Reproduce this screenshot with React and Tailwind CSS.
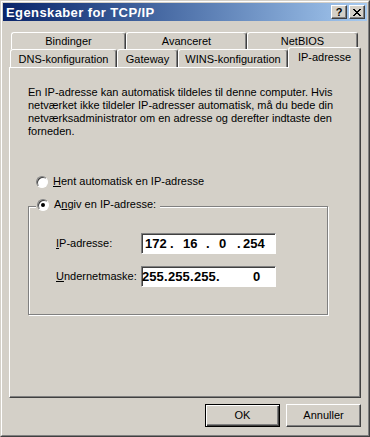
import React from 'react';

const raised = 'border border-t-white border-l-white border-r-[#404040] border-b-[#404040] shadow-[inset_-1px_-1px_#808080]';
const sunken = 'border border-t-[#808080] border-l-[#808080] border-r-white border-b-white shadow-[inset_1px_1px_#404040]';

const Tab = ({ className, children }) => (
  <div
    className={`flex items-center justify-center pt-px border-t border-l border-r border-t-white border-l-white border-r-[#404040] rounded-t-[3px] shadow-[inset_-1px_0_#808080] bg-[#d4d0c8] ${className}`}
  >
    {children}
  </div>
);

const Radio = ({ checked }) => (
  <span className="relative w-[12px] h-[12px] rounded-full bg-white border border-t-[#808080] border-l-[#808080] border-r-white border-b-white shadow-[inset_1px_1px_#404040] flex items-center justify-center shrink-0">
    {checked && <span className="w-[4px] h-[4px] rounded-full bg-black" />}
  </span>
);

// IP control: every part has a fixed width so the digits sit where the screenshot has them
const IpBox = ({ parts, className }) => (
  <div className={`w-[135px] h-[21px] bg-white flex items-center font-bold text-[13px] whitespace-pre leading-none ${sunken} ${className}`}>
    {parts.map(([text, w], i) => (
      <span key={i} className={`inline-block overflow-visible ${w}`}>{text}</span>
    ))}
  </div>
);

export default function App() {
  return (
    <div className="w-[370px] h-[437px] bg-[#d4d0c8] border border-t-[#d4d0c8] border-l-[#d4d0c8] border-r-[#404040] border-b-[#404040] font-['Liberation_Sans',Arial,sans-serif] text-[11px] text-black leading-[13px]">
      <div className="h-full border border-t-white border-l-white border-r-[#808080] border-b-[#808080] p-px flex flex-col">
        {/* title bar */}
        <div className="h-[18px] bg-linear-to-r from-[#0a246a] to-[#a6caf0] flex items-center pl-[3px] pr-[2px]">
          <span className="text-white font-bold text-[13px] tracking-[0.4px] flex-1">Egenskaber for TCP/IP</span>
          <div className={`w-[16px] h-[14px] bg-[#d4d0c8] flex items-center justify-center font-bold text-[11px] leading-none ${raised}`}>?</div>
          <div className={`w-[16px] h-[14px] ml-[2px] bg-[#d4d0c8] flex items-center justify-center ${raised}`}>
            <svg width="8" height="7" viewBox="0 0 8 7" shapeRendering="crispEdges">
              <path d="M0 0h2v1h-2zM6 0h2v1h-2zM1 1h2v1h-2zM5 1h2v1h-2zM2 2h4v1h-4zM3 3h2v1h-2zM2 4h4v1h-4zM1 5h2v1h-2zM5 5h2v1h-2zM0 6h2v1h-2zM6 6h2v1h-2z" fill="#000" />
            </svg>
          </div>
        </div>

        {/* back tab row */}
        <div className="flex mt-[11px] ml-[8px] h-[17px] items-start">
          <Tab className="w-[115px] h-[17px]">Bindinger</Tab>
          <Tab className="w-[121px] h-[17px]">Avanceret</Tab>
          <Tab className="w-[111px] h-[17px]">NetBIOS</Tab>
        </div>

        {/* front tab row */}
        <div className="flex ml-[7px] h-[18px] items-start">
          <Tab className="w-[107px] h-[18px] pt-[2px]">DNS-konfiguration</Tab>
          <Tab className="w-[61px] h-[18px] pt-[2px]">Gateway</Tab>
          <Tab className="w-[110px] h-[18px] pt-[2px]">WINS-konfiguration</Tab>
          <Tab className="relative z-10 w-[73px] h-[21px] -mt-[2px] pb-[2px]">IP-adresse</Tab>
        </div>

        {/* panel */}
        <div className={`ml-[6px] w-[352px] h-[331px] pt-[18px] pl-[18px] ${raised}`}>
          <p>
            En IP-adresse kan automatisk tildeles til denne computer. Hvis<br />
            netværket ikke tildeler IP-adresser automatisk, må du bede din<br />
            netværksadministrator om en adresse og derefter indtaste den<br />
            forneden.
          </p>

          <div className="flex items-center h-[13px] mt-[37px] ml-[8px] gap-[5px]">
            <Radio />
            <span><span className="underline underline-offset-1">H</span>ent automatisk en IP-adresse</span>
          </div>

          <div className="relative mt-[18px] w-[300px] h-[109px] border border-[#808080] shadow-[inset_1px_1px_#fff,1px_1px_#fff] pt-[26px] pl-[27px]">
            <div className="absolute -top-[9px] left-[7px] flex items-center h-[13px] gap-[5px] bg-[#d4d0c8] pl-px pr-[4px]">
              <Radio checked />
              <span>A<span className="underline underline-offset-1">n</span>giv en IP-adresse:</span>
            </div>

            <div className="flex items-center">
              <span className="w-[85px]"><span className="underline underline-offset-1">I</span>P-adresse:</span>
              <IpBox
                className="pl-[3px]"
                parts={[['172', 'w-[25px]'], ['.', 'w-[13px]'], ['16', 'w-[23px]'], ['.', 'w-[13px]'], ['0', 'w-[18px]'], ['.', 'w-[6px]'], ['254', 'w-[24px]']]}
              />
            </div>

            <div className="flex items-center mt-[12px]">
              <span className="w-[85px]"><span className="underline underline-offset-1">U</span>ndernetmaske:</span>
              <IpBox
                className="pl-0"
                parts={[['255', 'w-[22px]'], ['.', 'w-[4px]'], ['255', 'w-[22px]'], ['.', 'w-[4px]'], ['255', 'w-[22px]'], ['.', 'w-[37px]'], ['0', 'w-[10px]']]}
              />
            </div>
          </div>
        </div>

        {/* buttons */}
        <div className="flex justify-end gap-[6px] pr-[6px] mt-[6px]">
          <button className="w-[75px] h-[23px] border border-black shadow-[inset_1px_1px_#fff,inset_-1px_-1px_#404040,inset_-2px_-2px_#808080] bg-[#d4d0c8] text-[11px]">OK</button>
          <button className={`w-[75px] h-[23px] bg-[#d4d0c8] text-[11px] ${raised}`}>Annuller</button>
        </div>
      </div>
    </div>
  );
}
